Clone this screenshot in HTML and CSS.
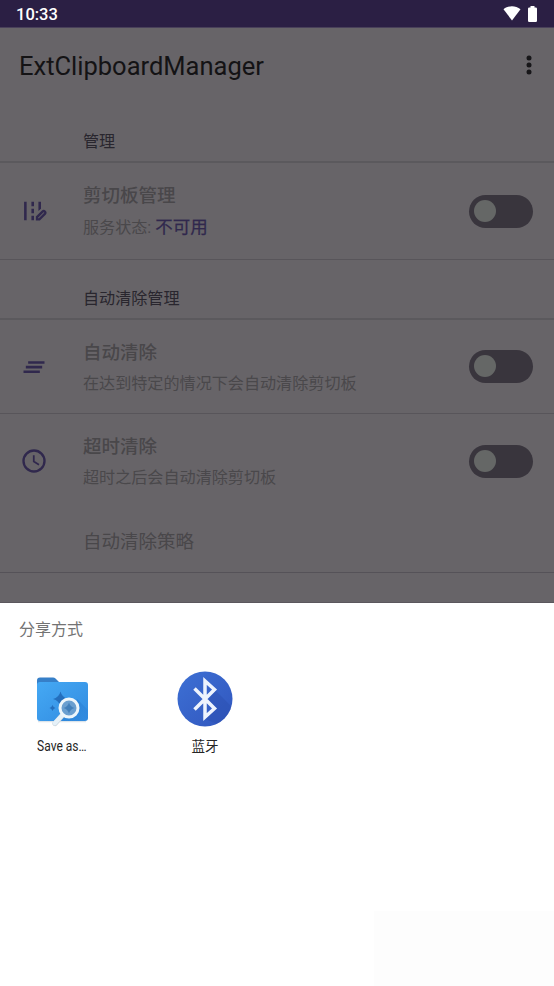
FILE: index.html
```html
<!DOCTYPE html>
<html lang="zh-CN">
<head>
<meta charset="utf-8">
<title>ExtClipboardManager</title>
<link rel="stylesheet" href="styles.css">
</head>
<body>
<div class="screen">
  <header class="status">
    <span>10:33</span>
    <div class="status-icons">
      <svg width="18" height="15" viewBox="0 0 18 15"><path d="M.5 3.200C5.500-.9 12.500-.9 17.500 3.200L9 14.500Z"/></svg>
      <svg width="9" height="16" viewBox="0 0 9 16"><path d="M2.500 0h4v1.600h1.300q1.200 0 1.200 1.200v12q0 1.200-1.200 1.200H1.200Q0 16 0 14.800v-12q0-1.200 1.200-1.200h1.300z"/></svg>
    </div>
  </header>
  <div class="appbar">
    <h1>ExtClipboardManager</h1>
    <svg width="6" height="20" viewBox="0 0 6 20"><circle cx="3" cy="3" r="2.500"/><circle cx="3" cy="10" r="2.500"/><circle cx="3" cy="17" r="2.500"/></svg>
  </div>
  <main>
    <h2 class="category">管理</h2>
    <section class="row row-service">
      <div class="icon"><svg width="28" height="28" viewBox="0 0 24 24"><path d="M3.500 4h2.200v16H3.500zM9.800 4H12v4H9.800zM9.800 10H12v4H9.800zM9.800 16H12v4H9.800zM15.800 4H18v6l-2.200 2z"/><path class="line" d="M14.600 19.200v-2l4.700-4.700q1-1 2 0t0 2l-4.700 4.700z"/></svg></div>
      <div class="text"><h3>剪切板管理</h3><p>服务状态: <b>不可用</b></p></div>
      <div class="switch"></div>
    </section>
    <h2 class="category">自动清除管理</h2>
    <section class="row row-auto">
      <div class="icon"><svg width="28" height="28" viewBox="0 0 24 24"><path d="M7 7h14v2.200H7zM5 11h14v2.200H5zM3 15h14v2.200H3z"/></svg></div>
      <div class="text"><h3>自动清除</h3><p>在达到特定的情况下会自动清除剪切板</p></div>
      <div class="switch"></div>
    </section>
    <section class="row row-timeout">
      <div class="icon"><svg width="28" height="28" viewBox="0 0 24 24"><circle class="line" cx="12" cy="12" r="9"/><path class="hand" d="M11.800 7v5.500l4.500 2.700"/></svg></div>
      <div class="text"><h3>超时清除</h3><p>超时之后会自动清除剪切板</p></div>
      <div class="switch"></div>
    </section>
    <div class="policy">自动清除策略</div>
  </main>
  <section class="sheet">
    <h2>分享方式</h2>
    <div class="targets">
      <div class="target">
        <svg width="56" height="56" viewBox="0 0 56 56">
          <defs>
            <linearGradient id="folder" x1="0" y1="0" x2="1" y2="1"><stop offset="0" stop-color="#45a9f4"/><stop offset="1" stop-color="#318be0"/></linearGradient>
            <linearGradient id="shade" x1="0" y1="0" x2="1" y2="1"><stop offset="0" stop-color="#1765bd" stop-opacity=".5"/><stop offset="1" stop-color="#1765bd" stop-opacity="0"/></linearGradient>
          </defs>
          <path d="M4 50.500h48" stroke="#dce4ea" stroke-width="1.500"/>
          <path d="M3 12V9.500q0-3 3-3h13q1.500 0 2.500 1l4 4v8H3z" fill="#367fc8"/>
          <path d="M3 14q0-3 3-3H51q3 0 3 3v33q0 3-3 3H6q-3 0-3-3z" fill="url(#folder)"/>
          <path d="m43 28 11 11v8q0 3-3 3H25z" fill="url(#shade)"/>
          <path d="M26.500 20.500q1.500 6 7.500 7.500-6 1.500-7.500 7.500-1.500-6-7.500-7.500 6-1.500 7.500-7.500zM18.500 34q.8 2.300 3 3-2.200.7-3 3-.8-2.300-3-3 2.200-.7 3-3z" fill="#246fbd"/>
          <path d="m29 43.500-8 9" stroke="#c9d5dd" stroke-width="5.200" stroke-linecap="round"/>
          <path d="m29 43.500-8.200 8.700" stroke="#e6f1f8" stroke-width="4.200" stroke-linecap="round"/>
          <circle cx="35" cy="37" r="9" fill="#6a9fd0" stroke="#edf6fb" stroke-width="3"/>
          <path d="M35 31.500q1.200 4.300 5.500 5.500-4.300 1.200-5.500 5.500-1.200-4.300-5.500-5.500 4.300-1.200 5.500-5.500z" fill="#417fba"/>
        </svg>
        <span class="save">Save as…</span>
      </div>
      <div class="target">
        <svg width="56" height="56" viewBox="0 0 56 56">
          <defs><linearGradient id="bt" x1="0" y1="0" x2="1" y2="1"><stop offset="0" stop-color="#3d70d4"/><stop offset="1" stop-color="#3156be"/></linearGradient><clipPath id="disc"><circle cx="28" cy="28" r="27.500"/></clipPath></defs>
          <circle cx="28" cy="28" r="27.500" fill="url(#bt)"/>
          <path d="m38 19 24 24v19L28 48l10-9-7-9z" fill="#284aa8" opacity=".35" clip-path="url(#disc)"/>
          <path d="m17.500 17.500 20 20L28 46V10l9.500 8.500-20 20" fill="none" stroke="#edf3fd" stroke-width="3.500"/>
        </svg>
        <span>蓝牙</span>
      </div>
    </div>
    <div class="tint"></div>
  </section>
</div>
</body>
</html>
```
FILE: styles.css
```css
* { box-sizing: border-box; }
body { margin: 0; background: #fff; font-family: Roboto, "Noto Sans CJK SC", sans-serif; }
h1, h2, h3, p { margin: 0; font-weight: 400; }
svg { display: block; }
.screen { width: 554px; height: 986px; display: flex; flex-direction: column; overflow: hidden; background: #676468; }
.status { height: 28px; flex: none; display: flex; align-items: center; justify-content: space-between; padding: 0 17px 0 16px; background: #2b1f44; border-bottom: 1px solid #49405a; color: #fff; font-size: 16.500px; font-weight: 500; }
.status span { padding-top: 2px; }
.status-icons { display: flex; align-items: center; gap: 7px; fill: #fff; }
.appbar { height: 75px; flex: none; display: flex; align-items: center; justify-content: space-between; padding: 0 22px 0 19px; color: #141315; }
.appbar h1 { font-size: 25.500px; }
.appbar svg { fill: #171619; margin-bottom: 2px; }
main { height: 500px; flex: none; border-bottom: 1px solid #5b575d; }
.category { height: 60px; padding: 19px 0 0 83px; border-bottom: 2px solid #5b595d; font-size: 16.100px; line-height: 40px; color: #29262e; }
.row { display: flex; align-items: center; padding: 0 21px 0 20px; }
.row-service { height: 97px; border-bottom: 1px solid #58555a; }
.row-auto { height: 94px; border-bottom: 1px solid #58555a; }
.row-timeout { height: 94px; }
.icon { width: 63px; fill: #30284d; }
.icon .line { fill: none; stroke: #30284d; stroke-width: 2; }
.icon .hand { fill: none; stroke: #30284d; stroke-width: 1.500; }
.text { flex: 1; padding-top: 4px; }
.row-service .text { padding-top: 2px; }
.text h3 { font-size: 18.500px; line-height: 30px; font-weight: 500; color: #49474a; }
.text p { font-size: 16.100px; line-height: 32px; color: #4a484b; }
.text b { font-size: 17.500px; font-weight: 400; color: #30284d; -webkit-text-stroke: .25px #30284d; }
.switch { width: 64.500px; height: 33px; padding: 5px 5.500px; border-radius: 17px; background: #39353d; }
.switch::before { content: ""; display: block; width: 22px; height: 22px; border-radius: 50%; background: #656766; }
.policy { height: 65px; padding: 3px 0 0 83px; border-bottom: 1px solid #555258; font-size: 18.500px; line-height: 62px; color: #49474a; }
.sheet { flex: 1; display: flex; flex-direction: column; background: #fff; }
.sheet h2 { padding: 12px 19px 0; font-size: 16px; line-height: 30px; color: #737373; }
.targets { display: flex; padding-top: 26px; }
.target { width: 124px; display: flex; flex-direction: column; align-items: center; font-size: 13.500px; line-height: 20px; color: #252525; }
.target + .target { width: 162px; }
.target span { margin-top: 9px; }
.target .save { margin-top: 10px; font-size: 14.500px; transform: scaleX(.83); white-space: nowrap; }
.tint { width: 180px; height: 75px; margin: auto 0 0 auto; background: #fdfdfd; }
```
